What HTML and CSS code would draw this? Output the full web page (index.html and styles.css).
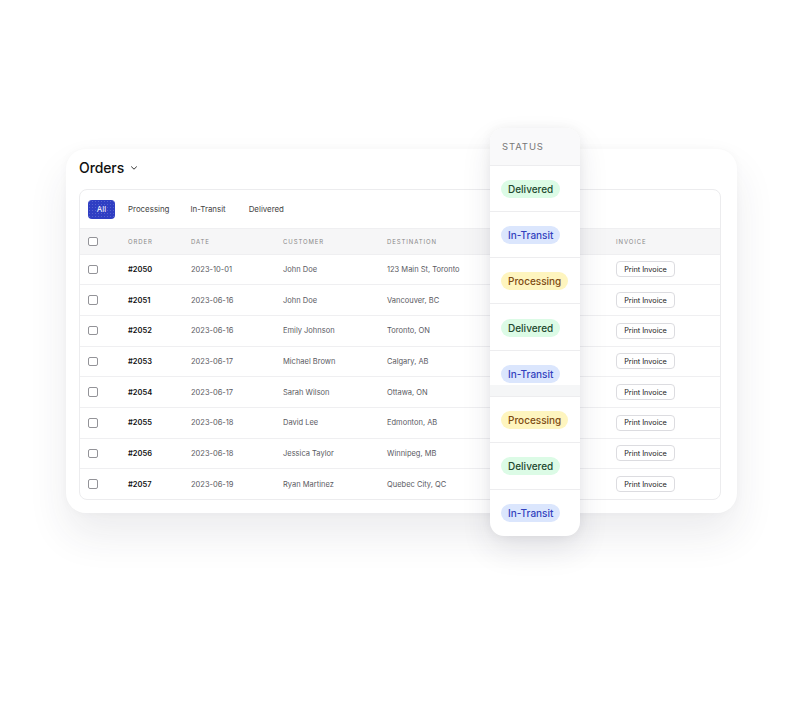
FILE: index.html
```html
<!DOCTYPE html>
<html>
<head>
<meta charset="utf-8">
<link rel="stylesheet" href="styles.css">
</head>
<body>
<div class="stage">
  <div class="card">
    <div class="title">
      <span>Orders</span>
      <svg class="chev" width="8" height="6" viewBox="0 0 8 6"><path d="M1.5 1.8 L4 4.2 L6.5 1.8" fill="none" stroke="#333" stroke-width="1" stroke-linecap="round" stroke-linejoin="round"/></svg>
    </div>
    <div class="table">
      <div class="tabs">
        <span class="tab active">All</span>
        <span class="tab">Processing</span>
        <span class="tab">In-Transit</span>
        <span class="tab">Delivered</span>
      </div>
      <div class="row head">
        <span><i class="cb"></i></span>
        <span>Order</span>
        <span>Date</span>
        <span>Customer</span>
        <span>Destination</span>
        <span>Invoice</span>
      </div>
      <div class="row"><span><i class="cb"></i></span><b>#2050</b><span>2023-10-01</span><span>John Doe</span><span>123 Main St, Toronto</span><span><button class="btn">Print Invoice</button></span></div>
      <div class="row"><span><i class="cb"></i></span><b>#2051</b><span>2023-06-16</span><span>John Doe</span><span>Vancouver, BC</span><span><button class="btn">Print Invoice</button></span></div>
      <div class="row"><span><i class="cb"></i></span><b>#2052</b><span>2023-06-16</span><span>Emily Johnson</span><span>Toronto, ON</span><span><button class="btn">Print Invoice</button></span></div>
      <div class="row"><span><i class="cb"></i></span><b>#2053</b><span>2023-06-17</span><span>Michael Brown</span><span>Calgary, AB</span><span><button class="btn">Print Invoice</button></span></div>
      <div class="row"><span><i class="cb"></i></span><b>#2054</b><span>2023-06-17</span><span>Sarah Wilson</span><span>Ottawa, ON</span><span><button class="btn">Print Invoice</button></span></div>
      <div class="row"><span><i class="cb"></i></span><b>#2055</b><span>2023-06-18</span><span>David Lee</span><span>Edmonton, AB</span><span><button class="btn">Print Invoice</button></span></div>
      <div class="row"><span><i class="cb"></i></span><b>#2056</b><span>2023-06-18</span><span>Jessica Taylor</span><span>Winnipeg, MB</span><span><button class="btn">Print Invoice</button></span></div>
      <div class="row last"><span><i class="cb"></i></span><b>#2057</b><span>2023-06-19</span><span>Ryan Martinez</span><span>Quebec City, QC</span><span><button class="btn">Print Invoice</button></span></div>
    </div>

    <div class="status">
      <div class="status-head">STATUS</div>
      <div class="scell"><span class="pill green">Delivered</span></div>
      <div class="scell"><span class="pill blue">In-Transit</span></div>
      <div class="scell"><span class="pill yellow">Processing</span></div>
      <div class="scell"><span class="pill green">Delivered</span></div>
      <div class="scell hover"><span class="pill blue">In-Transit</span></div>
      <div class="scell"><span class="pill yellow">Processing</span></div>
      <div class="scell"><span class="pill green">Delivered</span></div>
      <div class="scell end"><span class="pill blue">In-Transit</span></div>
    </div>
  </div>
</div>
</body>
</html>
```

FILE: styles.css
```css
* { box-sizing: border-box; }
html, body { margin: 0; padding: 0; background: #fff; }
body {
  width: 806px;
  height: 708px;
  overflow: hidden;
  font-family: Inter, "Noto Sans", sans-serif;
  color: #333;
}
.stage {
  padding: 149px 0 0 66px;
}
.card {
  position: relative;
  width: 671px;
  height: 364px;
  background: #fff;
  border-radius: 20px;
  padding: 9px 16px 0 13px;
  box-shadow: 0 0 10px rgba(20, 20, 40, 0.03), 0 22px 40px rgba(40, 40, 70, 0.09);
}
.title {
  display: flex;
  align-items: center;
  gap: 6px;
  height: 18px;
  font-size: 14px;
  font-weight: 500;
  color: #111;
  letter-spacing: -0.1px;
}
.chev { margin-top: 1px; }
.table {
  margin-top: 13px;
  border: 1px solid #ececee;
  border-radius: 8px;
  overflow: hidden;
}
.tabs {
  display: flex;
  align-items: center;
  height: 38px;
  padding-left: 8px;
}
.tab {
  font-size: 7.9px;
  color: #444;
  margin-right: 21px;
}
.tab.active {
  width: 27px;
  height: 19px;
  border-radius: 4px;
  color: #fff;
  display: flex;
  align-items: center;
  justify-content: center;
  margin-right: 13px;
  background-color: #2f3ec3;
  background-image: radial-gradient(rgba(255,255,255,0.18) 0.5px, transparent 0.8px);
  background-size: 3px 3px;
}
.tabs .tab:nth-child(3) { margin-right: 23px; }
.row {
  display: grid;
  grid-template-columns: 40px 63px 92px 104px 229px 1fr;
  align-items: center;
  padding-left: 8px;
  height: 30.7px;
  border-top: 1px solid #efeff1;
  font-size: 7.5px;
  color: #5a5a5f;
}
.row b { font-weight: 600; color: #111; }
.row.head {
  height: 25.5px;
  background: #f6f6f7;
  border-top: 1px solid #efeff1;
  font-size: 6px;
  letter-spacing: 0.9px;
  text-transform: uppercase;
  color: #888;
}
.cb {
  display: block;
  width: 9.5px;
  height: 9.5px;
  border: 1px solid #939398;
  border-radius: 2px;
  background: #fff;
}
.btn {
  font-family: inherit;
  font-size: 7.3px;
  color: #222;
  background: #fff;
  border: 1px solid #dcdce0;
  border-radius: 4px;
  height: 16px;
  width: 59px;
  padding: 0;
}
.status {
  position: absolute;
  left: 424px;
  top: -21px;
  width: 90px;
  background: #fff;
  border-radius: 14px;
  overflow: hidden;
  box-shadow: 0 0 12px rgba(20, 20, 40, 0.05), 0 14px 30px rgba(40, 40, 70, 0.10);
}
.status-head {
  height: 37.5px;
  background: #f9f9fa;
  display: flex;
  align-items: center;
  padding-left: 12px;
  font-size: 9.5px;
  letter-spacing: 0.9px;
  color: #777;
  border-bottom: 1px solid #ededef;
}
.scell {
  height: 46.3px;
  display: flex;
  align-items: center;
  padding-left: 11px;
  padding-top: 1px;
  border-bottom: 1px solid #ededef;
}
.scell.end { border-bottom: none; }
.scell.hover {
  background: linear-gradient(to bottom, #fff 0, #fff 34px, #f5f6f7 34px);
}
.pill {
  height: 18px;
  border-radius: 9px;
  padding: 0 7px;
  display: flex;
  align-items: center;
  font-size: 10px;
  font-weight: 500;
}
.green { background: #dcfbe6; color: #22482f; }
.blue { background: #dbe6fd; color: #3141bd; }
.yellow { background: #fef5bf; color: #7d4b12; }
```
